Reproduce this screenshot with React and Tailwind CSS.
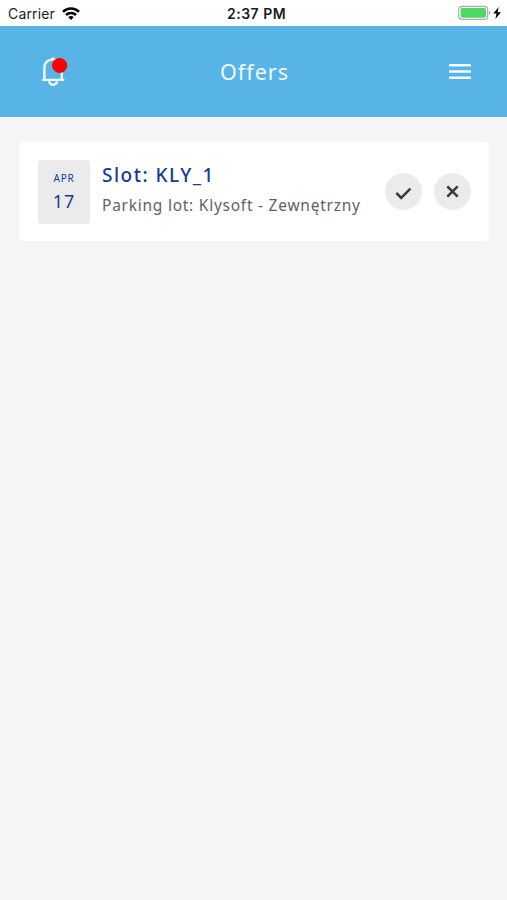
function StatusBar() {
  return (
    <div className="relative flex h-[26px] shrink-0 items-center justify-between bg-white pl-2 pr-[5px] font-['Inter',sans-serif] text-[#1c1c1c]">
      <div className="flex items-center gap-[7px] pt-px">
        <span className="text-[14px] leading-[25px] tracking-[0.15px]">Carrier</span>
        <svg width="18" height="13" viewBox="0 0 18 13" fill="none" stroke="#000" strokeWidth="2.5">
          <path d="M1 4.9C5.4 .5 12.6 .5 17 4.9" />
          <path d="M4 8C6.7 5.4 11.3 5.4 14 8" />
          <path d="M9 13 6.3 10.2c1.5-1.5 3.9-1.5 5.4 0z" fill="#000" stroke="none" />
        </svg>
      </div>
      <span className="absolute left-[227px] top-px text-[14px] font-semibold leading-[26px] tracking-[0.5px]">2:37 PM</span>
      <svg width="44" height="16" viewBox="0 0 44 16">
        <rect x="0.7" y="1.3" width="29" height="13" rx="3.4" fill="#fff" stroke="#aaa" strokeWidth="1.2" />
        <rect x="2.6" y="3.1" width="25.4" height="9.6" rx="1.8" fill="#4bd964" />
        <path d="M31 5.7c2 .8 2 3.6 0 4.4z" fill="#aaa" />
        <path d="M40.7 2 35.2 8.6h3.3L37.4 14l5.6-6.8h-3.4z" fill="#000" />
      </svg>
    </div>
  );
}

function Header() {
  return (
    <header className="grid h-[91px] shrink-0 grid-cols-[1fr_auto_1fr] items-center bg-[#58b4e6] pl-[41px] pr-[35px]">
      <svg width="28" height="32" viewBox="0 0 28 32" fill="none" stroke="#f4fbff" strokeWidth="2.3" strokeLinecap="round" strokeLinejoin="round">
        <path d="M2 23.8h20.4M3.4 23.4V11.5C3.4 6.6 7 3.4 12 3.4s8.8 3.2 8.8 8.1v11.9M12 3.3V2.5" />
        <path d="M8.4 26.2c1 3.4 6.4 3.4 7.4 0" />
        <circle cx="18.6" cy="9.5" r="7.6" fill="#ff0000" stroke="none" />
      </svg>
      <h1 className="-translate-x-[2px] font-['Noto_Sans',sans-serif] text-[21.5px] font-normal leading-7 tracking-[1px] text-[#f2faff]">Offers</h1>
      <svg className="justify-self-end" width="24" height="16" viewBox="0 0 24 16" fill="#f6fcff">
        <rect x="1" y="0" width="22" height="2.6" rx=".6" />
        <rect x="1" y="6.2" width="22" height="2.6" rx=".6" />
        <rect x="1" y="12.4" width="22" height="2.6" rx=".6" />
      </svg>
    </header>
  );
}

function RoundButton({ label, children }) {
  return (
    <button aria-label={label} className="flex size-[37px] items-center justify-center rounded-full bg-[#ebebeb]">
      <svg width="37" height="37" viewBox="0 0 37 37" fill="none" stroke="#3c3c3c" strokeWidth="2.6">
        {children}
      </svg>
    </button>
  );
}

function OfferCard() {
  return (
    <article className="flex h-[99px] items-center rounded-[4px] bg-white pl-[19px] pr-[18px] font-['Noto_Sans',sans-serif]">
      <div className="flex h-[64px] w-[52px] shrink-0 flex-col items-center rounded-[4px] bg-[#ebebeb] pt-[11px] text-[#153b98]">
        <span className="text-[10px] leading-[14px] tracking-[0.7px]">APR</span>
        <span className="mt-[5px] text-[18px] leading-[22px] tracking-[1px]">17</span>
      </div>
      <div className="mb-[4px] ml-3 flex-1 whitespace-nowrap">
        <h2 className="text-[19px] font-medium leading-[26px] tracking-[1.5px] text-[#153b98]">Slot: KLY_1</h2>
        <p className="mt-[5px] text-[15.5px] leading-[24px] tracking-[0.75px] text-[#626262]">Parking lot: Klysoft - Zewnętrzny</p>
      </div>
      <div className="flex gap-3">
        <RoundButton label="Accept">
          <path d="m11.4 20 4.8 4.8 9.2-9.2" />
        </RoundButton>
        <RoundButton label="Reject">
          <path d="m13.3 13.3 10.4 10.4m0-10.4-10.4 10.4" />
        </RoundButton>
      </div>
    </article>
  );
}

export default function App() {
  return (
    <div className="flex h-[900px] w-full flex-col overflow-hidden bg-[#f5f5f5]">
      <StatusBar />
      <Header />
      <main className="flex-1 pl-[19px] pr-[18px] pt-[25px]">
        <OfferCard />
      </main>
    </div>
  );
}
